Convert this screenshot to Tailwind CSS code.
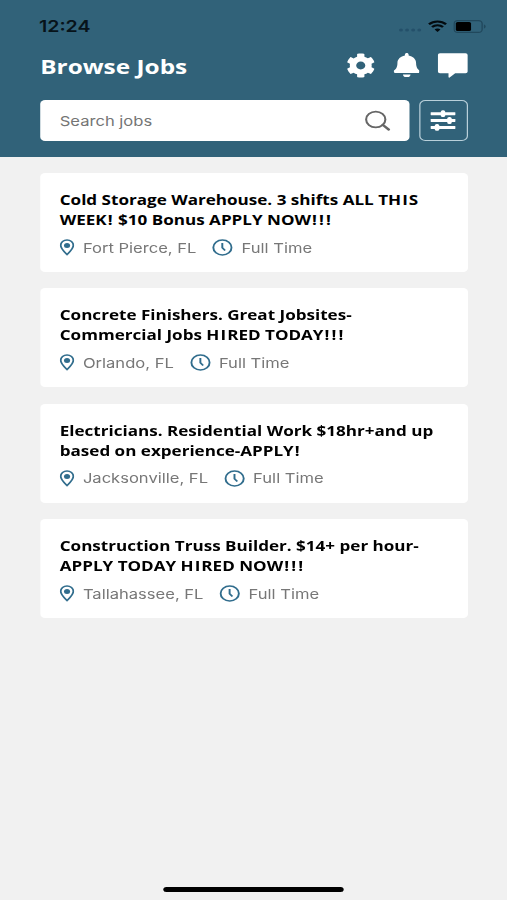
<!DOCTYPE html>
<html lang="en">
<head>
  <meta charset="UTF-8">
  <meta name="viewport" content="width=device-width, initial-scale=1.0">
  <title>Browse Jobs</title>
  <script src="https://cdn.jsdelivr.net/npm/@tailwindcss/browser@4"></script>
</head>
<body class="bg-[#f1f1f1] overflow-hidden">
  <div class="w-[416px] h-[900px] origin-left scale-x-[1.21875] flex flex-col font-['Open_Sans','Noto_Sans',sans-serif]">

    <!-- Header -->
    <header class="h-[157px] shrink-0 bg-[#316279] pl-[33px] pr-8">
      <div class="h-[52px] -ml-px -mr-[15px] flex items-center justify-between">
        <span class="text-[16px] leading-none font-semibold text-[#07131a] font-['Inter',sans-serif]">12:24</span>
        <div class="flex items-center">
          <svg class="w-[19px] h-1 mt-2 mr-[5px]" viewBox="0 0 19 4" fill="#24506a">
            <circle cx="2" cy="2" r="1.6"/><circle cx="7" cy="2" r="1.6"/><circle cx="12" cy="2" r="1.6"/><circle cx="17" cy="2" r="1.6"/>
          </svg>
          <svg class="w-4 h-3 mr-[5px]" viewBox="0 0 16 12" fill="none" stroke="#030a0e" stroke-width="2.1">
            <path d="M1 4.3a10 10 0 0 1 14 0M3.5 7.1a6.4 6.4 0 0 1 9 0"/>
            <path d="M8 8.6c-1 0-1.8.4-2.4 1L8 12l2.4-2.4c-.6-.6-1.4-1-2.4-1z" fill="#030a0e" stroke="none"/>
          </svg>
          <svg class="w-[27px] h-[13px]" viewBox="0 0 27 13">
            <rect x=".6" y=".6" width="23" height="11.8" rx="3" fill="none" stroke="#21485c" stroke-width="1.1"/>
            <rect x="2" y="2" width="12.5" height="9" rx="1.5" fill="#000"/>
            <path d="M25 4.5v4c1-.4 1.5-1.2 1.5-2s-.5-1.6-1.5-2z" fill="#21485c"/>
          </svg>
        </div>
      </div>

      <div class="h-[26px] flex items-center justify-between">
        <h1 class="text-[20px] leading-none font-bold text-white mt-1">Browse Jobs</h1>
        <div class="flex items-center gap-[15px] text-white">
          <svg class="w-[24px] h-[25px]" viewBox="0 0 512 512" preserveAspectRatio="none" fill="currentColor"><path d="M487.4 315.7l-42.6-24.6c4.3-23.2 4.3-47 0-70.2l42.6-24.6c4.9-2.8 7.1-8.6 5.5-14-11.1-35.6-30-67.8-54.7-94.6-3.8-4.1-10-5.1-14.8-2.3L380.8 110c-17.9-15.4-38.5-27.3-60.8-35.1V25.8c0-5.6-3.9-10.5-9.4-11.7-36.7-8.2-74.3-7.8-109.2 0-5.5 1.2-9.4 6.1-9.4 11.7V75c-22.2 7.9-42.8 19.8-60.8 35.1L88.7 85.5c-4.9-2.8-11-1.9-14.8 2.3-24.7 26.7-43.6 58.9-54.7 94.6-1.7 5.4.6 11.2 5.5 14L67.3 221c-4.3 23.2-4.3 47 0 70.2l-42.6 24.6c-4.9 2.8-7.1 8.6-5.5 14 11.1 35.6 30 67.8 54.7 94.6 3.8 4.1 10 5.1 14.8 2.3l42.6-24.6c17.9 15.4 38.5 27.3 60.8 35.1v49.2c0 5.6 3.9 10.5 9.4 11.7 36.7 8.2 74.3 7.8 109.2 0 5.5-1.2 9.4-6.1 9.4-11.7v-49.2c22.2-7.9 42.8-19.8 60.8-35.1l42.6 24.6c4.9 2.8 11 1.9 14.8-2.3 24.7-26.7 43.6-58.9 54.7-94.6 1.5-5.5-.7-11.3-5.6-14.1zM256 336c-44.1 0-80-35.9-80-80s35.9-80 80-80 80 35.9 80 80-35.9 80-80 80z"/></svg>
          <svg class="w-[21.5px] h-[24.5px]" viewBox="0 0 448 512" fill="currentColor"><path d="M224 512c35.32 0 63.97-28.65 63.97-64H160.03c0 35.35 28.65 64 63.97 64zm215.39-149.71c-19.32-20.76-55.47-51.99-55.47-154.29 0-77.7-54.48-139.9-127.94-155.16V32c0-17.67-14.32-32-31.98-32s-31.98 14.33-31.98 32v20.84C118.56 68.1 64.08 130.3 64.08 208c0 102.3-36.15 133.53-55.47 154.29-6 6.45-8.66 14.16-8.61 21.71.11 16.4 12.98 32 32.1 32h383.8c19.12 0 32-15.6 32.1-32 .05-7.55-2.61-15.27-8.61-21.71z"/></svg>
          <svg class="w-[25px] h-[25px]" viewBox="0 0 25 25" fill="currentColor"><path d="M2 .3h21a1.7 1.7 0 0 1 1.7 1.7v16.5a1.7 1.7 0 0 1-1.7 1.7h-8.5l-4.3 4a.6.6 0 0 1-1.2-.4v-3.6H2a1.7 1.7 0 0 1-1.7-1.7V2A1.7 1.7 0 0 1 2 .3z"/></svg>
        </div>
      </div>

      <div class="mt-[22px] flex gap-2">
        <div class="h-[41px] flex-1 rounded bg-white pl-4 pr-[15.5px] flex items-center justify-between">
          <span class="text-[13.6px] leading-none text-[#757575] mt-[2px] font-['Inter',sans-serif]">Search jobs</span>
          <svg class="w-[22px] h-[22px]" viewBox="0 0 22 22" fill="none" stroke="#666" stroke-width="1.7">
            <circle cx="9.3" cy="9.5" r="7.9"/>
            <path d="M15 14.8l5 4.8" stroke-width="2.2" stroke-linecap="round"/>
          </svg>
        </div>
        <div class="w-[40px] h-[41px] rounded-[5px] border border-[#b9d0da] text-white flex items-center justify-center">
          <svg class="w-[21px] h-[21px] -ml-px" viewBox="0 0 21 21" fill="currentColor">
            <rect x=".3" y="2.2" width="20.4" height="3" rx=".4"/><rect x="8.7" y=".3" width="3.6" height="6.8" rx="1.5"/>
            <rect x=".3" y="9" width="20.4" height="3" rx=".4"/><rect x="14" y="7.1" width="3.6" height="6.8" rx="1.5"/>
            <rect x=".3" y="15.9" width="20.4" height="3" rx=".4"/><rect x="3.8" y="14" width="3.6" height="6.8" rx="1.5"/>
          </svg>
        </div>
      </div>
    </header>

    <!-- Job list -->
    <main id="jobs" class="flex-1 pl-[33px] pr-8 pt-4 flex flex-col gap-[16.4px]"></main>

    <!-- Home indicator -->
    <div class="h-[13px] shrink-0 flex justify-center">
      <div class="w-[148px] h-[5px] rounded-full bg-black"></div>
    </div>
  </div>

  <script>
    const jobs = [
      { title: ['Cold Storage Warehouse. 3 shifts ALL THIS', 'WEEK! $10 Bonus APPLY NOW!!!'], city: 'Fort Pierce, FL' },
      { title: ['Concrete Finishers. Great Jobsites-', 'Commercial Jobs HIRED TODAY!!!'], city: 'Orlando, FL' },
      { title: ['Electricians. Residential Work $18hr+and up', 'based on experience-APPLY!'], city: 'Jacksonville, FL' },
      { title: ['Construction Truss Builder. $14+ per hour-', 'APPLY TODAY HIRED NOW!!!'], city: 'Tallahassee, FL' },
    ];
    // a little air around the narrow capitals and marks
    const spaced = line => line.replace(/[!I]/g, '<span class="px-[0.85px]">$&</span>');
    document.getElementById('jobs').innerHTML = jobs.map(job => `
      <article class="h-[99px] shrink-0 rounded bg-white px-4 pt-[17px]">
        <h2 class="text-[14px] leading-5 font-bold text-black whitespace-nowrap">${job.title.map(spaced).join('<br>')}</h2>
        <div class="mt-[9px] h-[18px] flex items-center text-[13.6px] leading-none text-[#777] whitespace-nowrap font-['Inter',sans-serif]">
          <svg class="w-3 h-[17px] mr-[7px] -mt-px" viewBox="0 0 12 17" fill="none" stroke="#316d8d" stroke-width="1.5">
            <path d="M6 15.6C3.5 12.6.8 9.6.8 6.3a5.2 5.4 0 0 1 10.4 0C11.2 9.6 8.5 12.6 6 15.6z"/>
            <circle cx="6" cy="6.4" r="2.5" fill="#316d8d" stroke="none"/>
          </svg>
          <span class="mt-px">${job.city}</span>
          <svg class="w-[17px] h-[17px] ml-[13px] mr-[7px] -mt-px" viewBox="0 0 17 17" fill="none" stroke="#316d8d" stroke-width="1.6">
            <circle cx="8.5" cy="8.5" r="7.5"/>
            <path d="M8.4 4v4.8l2.3 2.7"/>
          </svg>
          <span class="mt-px">Full Time</span>
        </div>
      </article>`).join('');
  </script>
</body>
</html>
